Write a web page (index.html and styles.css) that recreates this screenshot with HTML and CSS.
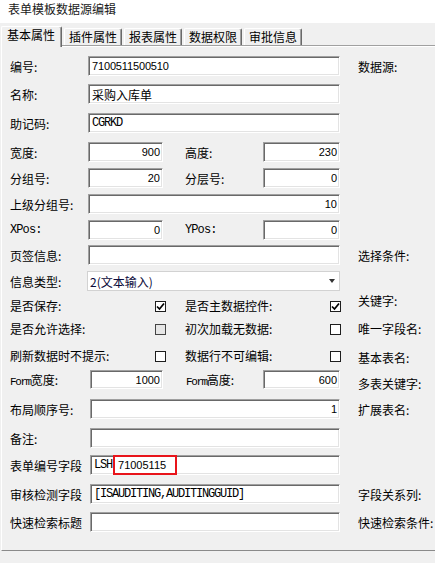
FILE: index.html
```html
<!DOCTYPE html>
<html lang="zh-CN">
<head>
<meta charset="utf-8">
<title>表单模板数据源编辑</title>
<link rel="stylesheet" href="styles.css">
</head>
<body>
<div class="title">表单模板数据源编辑</div>
<div class="tabs">
  <div class="tab active">基本属性</div>
  <div class="tab">插件属性</div>
  <div class="tab">报表属性</div>
  <div class="tab">数据权限</div>
  <div class="tab">审批信息</div>
</div>
<div class="panel">
  <div class="row">
    <span class="lbl">编号:</span>
    <div class="field wide"><span class="sans">7100511500510</span></div>
    <span class="rlbl">数据源:</span>
  </div>
  <div class="row m8">
    <span class="lbl">名称:</span>
    <div class="field wide"><span class="cjk">采购入库单</span></div>
  </div>
  <div class="row m9">
    <span class="lbl">助记码:</span>
    <div class="field wide"><span class="mono">CGRKD</span></div>
  </div>
  <div class="row m9">
    <span class="lbl">宽度:</span>
    <div class="field narrow num">900</div>
    <span class="lbl2">高度:</span>
    <div class="field narrow2 num">230</div>
  </div>
  <div class="row m6">
    <span class="lbl">分组号:</span>
    <div class="field narrow num">20</div>
    <span class="lbl2">分层号:</span>
    <div class="field narrow2 num">0</div>
  </div>
  <div class="row m6">
    <span class="lbl">上级分组号:</span>
    <div class="field wide num">10</div>
  </div>
  <div class="row m6">
    <span class="lbl mono-lbl">XPos:</span>
    <div class="field narrow num">0</div>
    <span class="lbl2 mono-lbl">YPos:</span>
    <div class="field narrow2 num">0</div>
  </div>
  <div class="row m5">
    <span class="lbl">页签信息:</span>
    <div class="field wide"></div>
    <span class="rlbl">选择条件:</span>
  </div>
  <div class="row m6">
    <span class="lbl">信息类型:</span>
    <div class="select"><span>2(文本输入)</span><span class="arrow"></span></div>
  </div>
  <div class="row m4">
    <span class="clbl">是否保存:</span>
    <span class="cb"><svg width="9" height="9" viewBox="0 0 9 9"><polyline points="1,4.5 3.5,7 8,1.5" fill="none" stroke="#000" stroke-width="1.7"/></svg></span>
    <span class="clbl2">是否主数据控件:</span>
    <span class="cb"><svg width="9" height="9" viewBox="0 0 9 9"><polyline points="1,4.5 3.5,7 8,1.5" fill="none" stroke="#000" stroke-width="1.7"/></svg></span>
    <span class="rlbl2 up">关键字:</span>
  </div>
  <div class="row m3">
    <span class="clbl">是否允许选择:</span>
    <span class="cb dis"></span>
    <span class="clbl2">初次加载无数据:</span>
    <span class="cb"></span>
    <span class="rlbl2">唯一字段名:</span>
  </div>
  <div class="row m7">
    <span class="clbl">刷新数据时不提示:</span>
    <span class="cb"></span>
    <span class="clbl2">数据行不可编辑:</span>
    <span class="cb"></span>
    <span class="rlbl2 down4">基本表名:</span>
  </div>
  <div class="row m5 short">
    <span class="lbl lbl-b"><span class="mono-s">Form</span>宽度:</span>
    <div class="field narrow-b num">1000</div>
    <span class="lbl2 lbl2-b"><span class="mono-s">Form</span>高度:</span>
    <div class="field narrow2 num">600</div>
    <span class="rlbl down8">多表关键字:</span>
  </div>
  <div class="row m10">
    <span class="lbl lbl-b">布局顺序号:</span>
    <div class="field wide-b num">1</div>
    <span class="rlbl">扩展表名:</span>
  </div>
  <div class="row m9">
    <span class="lbl lbl-b">备注:</span>
    <div class="field wide-b"></div>
  </div>
  <div class="row m7">
    <span class="lbl lbl-b">表单编号字段</span>
    <div class="field wide-b"><span class="mono">LSH</span><span class="mark">71005115</span></div>
  </div>
  <div class="row m9">
    <span class="lbl lbl-b">审核检测字段</span>
    <div class="field wide-b"><span class="mono">[ISAUDITING,AUDITINGGUID]</span></div>
    <span class="rlbl">字段关系列:</span>
  </div>
  <div class="row m8">
    <span class="lbl lbl-b">快速检索标题</span>
    <div class="field wide-b"></div>
    <span class="rlbl">快速检索条件:</span>
  </div>
</div>
</body>
</html>
```
FILE: styles.css
```css
* { box-sizing: border-box; }
html, body { margin: 0; padding: 0; }
body {
  width: 435px;
  height: 563px;
  overflow: hidden;
  background: #f0f0f0;
  font-family: "Noto Sans CJK SC", "Noto Sans", sans-serif;
  font-size: 12px;
  color: #000;
}
.title {
  height: 23px;
  background: #fff;
  padding-left: 8px;
  line-height: 18px;
  color: #1a1a1a;
  white-space: nowrap;
}
.tabs {
  height: 22px;
  display: flex;
  align-items: flex-end;
  padding-left: 1px;
  white-space: nowrap;
}
.tab {
  height: 17px;
  padding: 0 4px;
  margin-left: 2px;
  border-top: 1px solid #fff;
  border-left: 1px solid #fff;
  border-right: 1px solid #696969;
  box-shadow: inset -1px 0 0 #a0a0a0;
  border-radius: 2px 2px 0 0;
  line-height: 16px;
}
.tab.active {
  height: 21px;
  margin-left: 0;
  margin-bottom: -2px;
  padding: 0 6px 0 5px;
  line-height: 15px;
  position: relative;
  z-index: 1;
  background: #f0f0f0;
}
.panel {
  width: 434px;
  height: 506px;
  overflow: hidden;
  margin-left: 1px;
  border-top: 1px solid #a0a0a0;
  border-left: 1px solid #fff;
  border-bottom: 1px solid #8a8a8a;
  box-shadow: inset 0 1px 0 #fff;
  padding: 10px 0 0 8px;
}
.row {
  display: flex;
  align-items: center;
  height: 20px;
  white-space: nowrap;
}
.row.short { height: 19px; }
.m3 { margin-top: 3px; }
.m4 { margin-top: 4px; }
.m5 { margin-top: 5px; }
.m6 { margin-top: 6px; }
.m7 { margin-top: 7px; }
.m8 { margin-top: 8px; }
.m9 { margin-top: 9px; }
.m10 { margin-top: 10px; }

.lbl { width: 78px; flex: none; }
.lbl-b { width: 80px; }
.lbl2 { width: 78px; margin-left: 22px; flex: none; }
.lbl2-b { width: 77px; margin-left: 23px; }
.rlbl { margin-left: 18px; flex: none; }
.rlbl2 { margin-left: 17px; flex: none; }
.up { margin-top: -10px; }
.down4 { margin-top: 4px; }
.down8 { margin-top: 8px; }
.mono-lbl {
  font-family: "Liberation Mono", monospace;
  font-size: 12px;
  letter-spacing: -0.9px;
}
.mono-s {
  font-family: "Liberation Mono", monospace;
  font-size: 11px;
  letter-spacing: -1.4px;
}

.field {
  height: 100%;
  flex: none;
  background: #fff;
  border-top: 1px solid #a0a0a0;
  border-left: 1px solid #a0a0a0;
  border-right: 1px solid #fff;
  border-bottom: 1px solid #fff;
  box-shadow: inset 1px 1px 0 #696969, inset -1px -1px 0 #e3e3e3;
  padding: 0 3px 0 3px;
  display: flex;
  align-items: center;
  font-family: "Liberation Sans", sans-serif;
  font-size: 11px;
}
.wide { width: 252px; }
.wide-b { width: 250px; }
.narrow { width: 75px; }
.narrow-b { width: 73px; }
.narrow2 { width: 77px; }
.num { justify-content: flex-end; padding-right: 2px; }
.sans { font-family: "Liberation Sans", sans-serif; font-size: 11px; letter-spacing: -0.15px; }
.cjk { font-family: "Noto Sans CJK SC", sans-serif; font-size: 12px; }
.mono {
  font-family: "Liberation Mono", monospace;
  font-size: 12px;
  letter-spacing: -1.2px;
}
.mark {
  height: 20px;
  margin: -1px 0;
  margin-left: 1px;
  width: 64px;
  border: 2px solid #e8141a;
  padding-left: 3px;
  display: flex;
  align-items: center;
  font-family: "Liberation Sans", sans-serif;
  font-size: 11px;
}

.select {
  width: 253px;
  height: 20px;
  flex: none;
  margin-left: -1px;
  background: #fff;
  border: 1px solid #d2d2d2;
  display: flex;
  align-items: center;
  justify-content: space-between;
  padding: 0 4px 0 2px;
  color: #0a0a3a;
}
.arrow {
  width: 0;
  height: 0;
  border-left: 3.5px solid transparent;
  border-right: 3.5px solid transparent;
  border-top: 4px solid #333;
}

.clbl { width: 145px; flex: none; }
.clbl2 { width: 145px; margin-left: 19px; flex: none; }
.cb {
  width: 11px;
  height: 11px;
  flex: none;
  border: 1px solid #1e1e1e;
  background: #fff;
  display: flex;
  align-items: center;
  justify-content: center;
  margin-top: 3px;
}
.cb.dis { background: #e6e6e6; border-color: #444; }
```
